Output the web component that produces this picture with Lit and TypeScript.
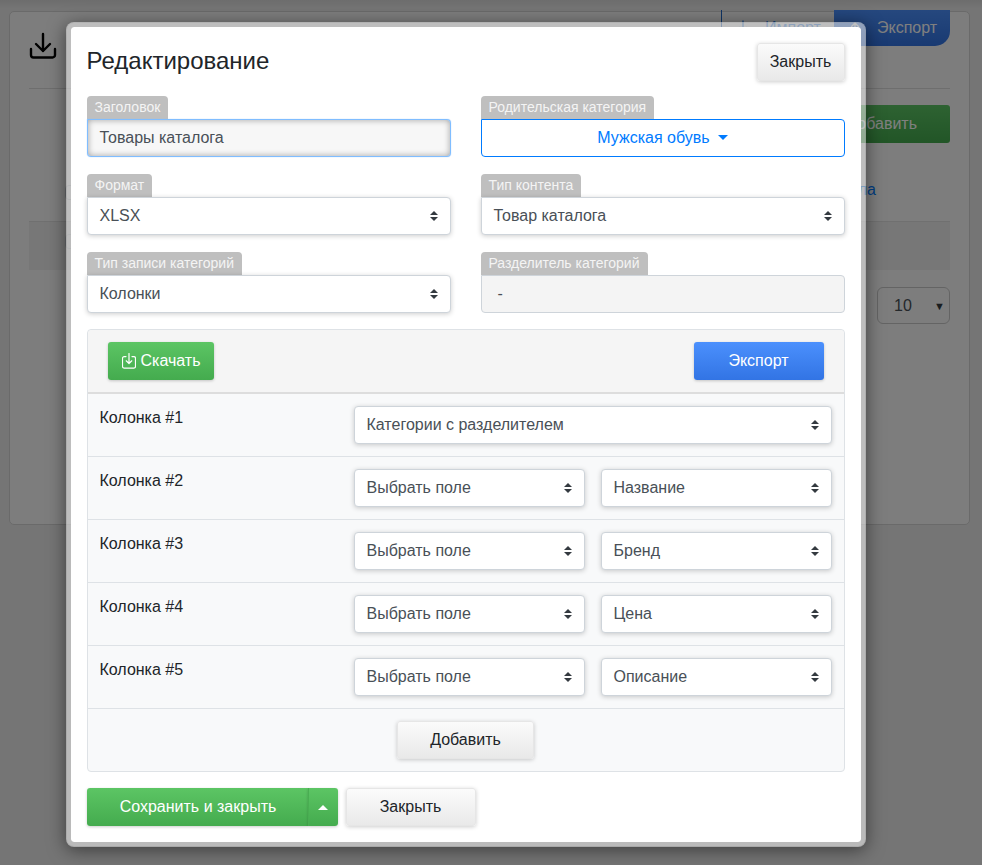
import { LitElement, html, css } from 'lit';
import { customElement } from 'lit/decorators.js';

const spinner = html`<svg class="spin" width="8" height="10" viewBox="0 0 4 5"><path d="M2 0L0 2h4zm0 5L0 3h4z" fill="#343a40"/></svg>`;

const columns = [
  { name: 'Колонка #1', values: ['Категории с разделителем'] },
  { name: 'Колонка #2', values: ['Выбрать поле', 'Название'] },
  { name: 'Колонка #3', values: ['Выбрать поле', 'Бренд'] },
  { name: 'Колонка #4', values: ['Выбрать поле', 'Цена'] },
  { name: 'Колонка #5', values: ['Выбрать поле', 'Описание'] },
];

@customElement('app-root')
export class AppRoot extends LitElement {
  static styles = css`
    :host {
      display: block;
      position: relative;
      height: 865px;
      overflow: hidden;
      background: #ebebeb;
      font-family: 'Liberation Sans', Arial, sans-serif;
      font-size: 16px;
      line-height: 24px;
      color: #212529;
    }

    /* page behind the dialog */
    .page {
      padding: 11px 12px 0 9px;
      background: linear-gradient(rgba(0, 0, 0, 0.07), rgba(0, 0, 0, 0) 9px);
    }

    .card {
      height: 514px;
      box-sizing: border-box;
      background: #fbfbfb;
      border: 1px solid #d4d4d4;
      border-radius: 5px;
      padding: 0 19px;
    }

    .card-head {
      height: 76px;
      display: flex;
      justify-content: space-between;
      align-items: flex-start;
      border-bottom: 1px solid #dcdcdc;
    }

    .card-icon {
      margin-top: 20px;
      display: block;
    }

    .group {
      display: flex;
      margin-top: -2px;
      height: 36px;
    }

    .group div {
      display: flex;
      align-items: center;
      gap: 15px;
      box-sizing: border-box;
    }

    .group .imp {
      width: 113px;
      padding-left: 14px;
      border-left: 1px solid #1c66c8;
      color: #3a8bf0;
    }

    .group .exp {
      width: 116px;
      padding-left: 14px;
      background: linear-gradient(#4b90fd, #3274e4);
      color: #fff;
      border-bottom-right-radius: 15px;
    }

    .bg-add {
      margin: 16px 0 0 auto;
      width: 130px;
      height: 38px;
      box-sizing: border-box;
      padding-right: 33px;
      display: flex;
      align-items: center;
      justify-content: flex-end;
      background: linear-gradient(#5cc564, #44ab4e);
      border-radius: 3px;
      color: #fff;
    }

    .bg-link {
      margin-top: 35px;
      height: 24px;
      display: flex;
      justify-content: space-between;
      padding: 0 74px 0 36px;
      color: #007bff;
    }

    .stub {
      width: 120px;
      height: 15px;
      box-sizing: border-box;
      border: 1px solid #ced4da;
      border-radius: 4px;
      margin-top: 7px;
    }

    .bg-head {
      margin-top: 19px;
      height: 49px;
      box-sizing: border-box;
      padding: 12px 0 0 36px;
      background: #eeeeee;
      border-top: 1px solid #e0e0e0;
    }

    .bg-head .stub {
      margin-top: 0;
    }

    .bg-size {
      margin: 17px 0 0 auto;
      width: 73px;
      height: 37px;
      box-sizing: border-box;
      border: 1px solid #c9c9c9;
      border-radius: 6px;
      padding: 0 4px 0 16px;
      display: flex;
      align-items: center;
      justify-content: space-between;
      color: #495057;
    }

    .bg-size i {
      font-style: normal;
      font-size: 11px;
      color: #343a40;
    }

    .backdrop {
      position: absolute;
      inset: 0;
      background: rgba(0, 0, 0, 0.5);
    }

    /* dialog */
    .modal {
      position: absolute;
      left: 65.5px;
      top: 22px;
      width: 800px;
      height: 825px;
      box-sizing: border-box;
      background: #fff;
      background-clip: padding-box;
      border: 5px solid rgba(255, 255, 255, 0.5);
      border-radius: 8px;
      box-shadow: 0 3px 18px rgba(0, 0, 0, 0.5);
      padding: 16px;
    }

    .modal-head {
      display: flex;
      justify-content: space-between;
      align-items: flex-start;
      margin-bottom: 15px;
    }

    h1 {
      margin: 0;
      font-size: 24px;
      line-height: 36px;
      font-weight: 400;
    }

    .btn {
      height: 38px;
      box-sizing: border-box;
      display: flex;
      align-items: center;
      justify-content: center;
      border-radius: 3px;
      white-space: nowrap;
    }

    .btn-light {
      background: linear-gradient(#fbfbfb, #e9e9e9);
      border: 1px solid #e6e6e6;
      box-shadow: 0 1px 4px rgba(0, 0, 0, 0.2);
      color: #212529;
    }

    .btn-green {
      background: linear-gradient(#5cc564, #44ab4e);
      color: #fff;
      box-shadow: 0 1px 3px rgba(0, 0, 0, 0.2);
    }

    .btn-blue {
      background: linear-gradient(#4b90fd, #3274e4);
      color: #fff;
      box-shadow: 0 1px 3px rgba(0, 0, 0, 0.2);
    }

    .close {
      width: 88px;
    }

    .fields {
      display: grid;
      grid-template-columns: 364px 364px;
      column-gap: 30px;
      row-gap: 17px;
    }

    .field-label {
      display: table;
      height: 23px;
      box-sizing: border-box;
      padding: 0 8px;
      background: #bfbfbf;
      border-radius: 4px 4px 0 0;
      color: #f4f4f4;
      font-size: 14px;
      line-height: 23px;
    }

    .control {
      height: 38px;
      box-sizing: border-box;
      display: flex;
      align-items: center;
      justify-content: space-between;
      padding: 0 12px;
      border: 1px solid #ced4da;
      border-radius: 4px;
      background: #fff;
      color: #495057;
      box-shadow: 0 1px 5px rgba(0, 0, 0, 0.2);
      white-space: nowrap;
    }

    .spin {
      flex: none;
    }

    .field-label + .control {
      border-top-left-radius: 0;
    }

    .focused {
      background: #f7f7f7;
      border-color: #80bdff;
      box-shadow: inset 0 0 6px rgba(0, 0, 0, 0.35), 0 0 1px #80bdff;
    }

    .dropdown {
      justify-content: center;
      gap: 8px;
      border-color: #007bff;
      color: #007bff;
      box-shadow: none;
    }

    .caret {
      width: 0;
      height: 0;
      border-left: 5px solid transparent;
      border-right: 5px solid transparent;
      border-top: 5px solid currentColor;
      margin-top: -2px;
    }

    .caret.up {
      border-top: 0;
      border-bottom: 5px solid currentColor;
      margin-top: 0;
    }

    .readonly {
      background: #f4f4f4;
      box-shadow: none;
      padding-left: 16px;
    }

    .panel {
      margin-top: 16px;
      height: 443px;
      box-sizing: border-box;
      border: 1px solid #dee2e6;
      border-radius: 4px;
      background: #f8f9fa;
    }

    .panel-head {
      display: flex;
      justify-content: space-between;
      padding: 12px 20px;
      background: #f5f5f5;
      border-bottom: 2px solid #dddddd;
      border-radius: 4px 4px 0 0;
    }

    .download {
      width: 106px;
      justify-content: flex-start;
      gap: 5px;
      padding-left: 14px;
    }

    .export {
      width: 130px;
    }

    .row {
      display: flex;
      padding: 12px;
      border-bottom: 1px solid #dee2e6;
    }

    .row-name {
      width: 254px;
      flex: none;
    }

    .row-values {
      flex: 1;
      display: flex;
      gap: 16px;
    }

    .row-values .control {
      flex: 1;
    }

    .panel-foot {
      display: flex;
      justify-content: center;
      padding-top: 12px;
    }

    .add {
      width: 137px;
    }

    .actions {
      margin-top: 16px;
      display: flex;
      gap: 8px;
    }

    .split {
      display: flex;
    }

    .save {
      width: 221px;
      padding-left: 2px;
      border-radius: 3px 0 0 3px;
    }

    .save-more {
      width: 30px;
      border-left: 1px solid #49ae52;
      border-radius: 0 3px 3px 0;
    }

    .cancel {
      width: 130px;
    }
  `;

  private renderField(label: string, control: unknown) {
    return html`<div><span class="field-label">${label}</span>${control}</div>`;
  }

  private renderSelect(value: string) {
    return html`<div class="control"><span>${value}</span>${spinner}</div>`;
  }

  render() {
    return html`
      <div class="page">
        <div class="card">
          <div class="card-head">
            <svg class="card-icon" width="28" height="28" viewBox="0 0 28 28" fill="none" stroke="#000" stroke-width="2.4" stroke-linecap="round" stroke-linejoin="round">
              <path d="M14 2v17M7 12l7 7 7-7M2 17v6a2.5 2.5 0 0 0 2.5 2.5h19A2.5 2.5 0 0 0 26 23v-6"/>
            </svg>
            <div class="group">
              <div class="imp">
                <svg width="14" height="16" viewBox="0 0 14 16" fill="none" stroke="currentColor" stroke-width="1.4" stroke-linecap="round" stroke-linejoin="round">
                  <path d="M7 1v10M3.5 7.5L7 11l3.5-3.5"/>
                </svg>
                <span>Импорт</span>
              </div>
              <div class="exp">
                <svg width="14" height="16" viewBox="0 0 14 16" fill="none" stroke="#fff" stroke-width="1.4" stroke-linecap="round" stroke-linejoin="round">
                  <path d="M7 13V3M3.5 6.5L7 3l3.5 3.5"/>
                </svg>
                <span>Экспорт</span>
              </div>
            </div>
          </div>
          <div class="bg-add">Добавить</div>
          <div class="bg-link"><div class="stub"></div><span>Из файла</span></div>
          <div class="bg-head"><div class="stub"></div></div>
          <div class="bg-size">10 <i>▼</i></div>
        </div>
      </div>
      <div class="backdrop"></div>

      <div class="modal">
        <div class="modal-head">
          <h1>Редактирование</h1>
          <div class="btn btn-light close">Закрыть</div>
        </div>

        <div class="fields">
          ${this.renderField('Заголовок', html`<div class="control focused">Товары каталога</div>`)}
          ${this.renderField('Родительская категория', html`<div class="control dropdown">Мужская обувь <span class="caret"></span></div>`)}
          ${this.renderField('Формат', this.renderSelect('XLSX'))}
          ${this.renderField('Тип контента', this.renderSelect('Товар каталога'))}
          ${this.renderField('Тип записи категорий', this.renderSelect('Колонки'))}
          ${this.renderField('Разделитель категорий', html`<div class="control readonly">-</div>`)}
        </div>

        <div class="panel">
          <div class="panel-head">
            <div class="btn btn-green download">
              <svg width="14" height="16" viewBox="0 0 14 16" fill="none" stroke="#fff" stroke-width="1.2" stroke-linecap="round" stroke-linejoin="round">
                <path d="M4 3.6H2.2A1.7 1.7 0 0 0 .5 5.3v8.2a1.7 1.7 0 0 0 1.7 1.7h9.6a1.7 1.7 0 0 0 1.7-1.7V5.3a1.7 1.7 0 0 0-1.7-1.7H10M7 .5v10M4.2 7.8L7 10.5l2.8-2.7"/>
              </svg>
              <span>Скачать</span>
            </div>
            <div class="btn btn-blue export">Экспорт</div>
          </div>
          ${columns.map(
            (col) => html`
              <div class="row">
                <div class="row-name">${col.name}</div>
                <div class="row-values">${col.values.map((v) => this.renderSelect(v))}</div>
              </div>
            `
          )}
          <div class="panel-foot"><div class="btn btn-light add">Добавить</div></div>
        </div>

        <div class="actions">
          <div class="split">
            <div class="btn btn-green save">Сохранить и закрыть</div>
            <div class="btn btn-green save-more"><span class="caret up"></span></div>
          </div>
          <div class="btn btn-light cancel">Закрыть</div>
        </div>
      </div>
    `;
  }
}

declare global {
  interface HTMLElementTagNameMap {
    'app-root': AppRoot;
  }
}
